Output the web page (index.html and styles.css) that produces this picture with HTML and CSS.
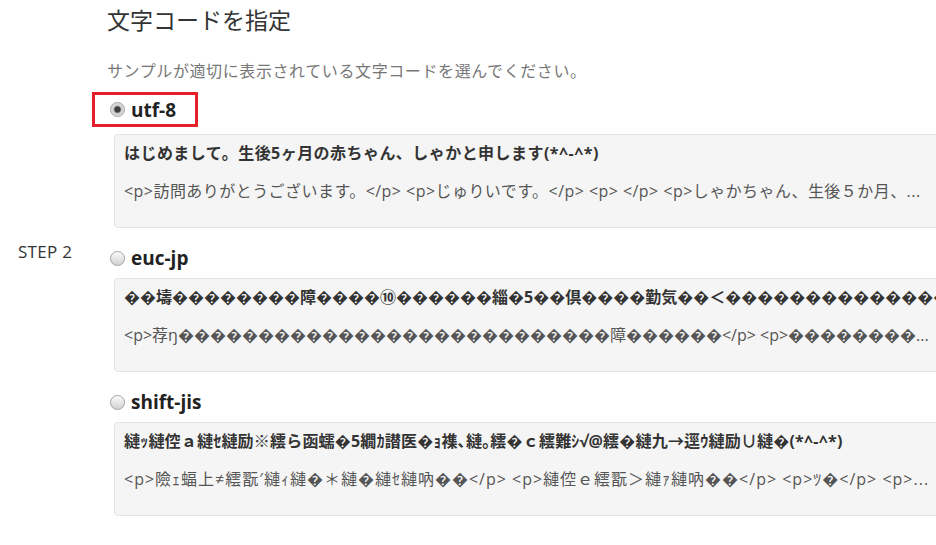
FILE: index.html
```html
<!DOCTYPE html>
<html>
<head>
    <title>文字コードを指定</title>
    <link rel="stylesheet" href="styles.css">
</head>
<body>
    <div class="page">
        <div class="step">STEP 2</div>

        <div class="main">
            <h2 class="title">文字コードを指定</h2>
            <p class="lead">サンプルが適切に表示されている文字コードを選んでください。</p>

            <!-- utf-8 -->
            <label class="choice picked"><input type="radio" name="charset" value="utf-8" checked> utf-8</label>
            <div class="sample sample-utf8">
                <p class="sample-title">はじめまして。生後5ヶ月の赤ちゃん、しゃかと申します(*^-^*)</p>
                <p class="sample-body">&lt;p&gt;訪問ありがとうございます。&lt;/p&gt; &lt;p&gt;じゅりいです。&lt;/p&gt; &lt;p&gt; &lt;/p&gt; &lt;p&gt;しゃかちゃん、生後５か月、...</p>
            </div>

            <!-- euc-jp -->
            <label class="choice"><input type="radio" name="charset" value="euc-jp"> euc-jp</label>
            <div class="sample sample-euc">
                <p class="sample-title">��壔��������障����⑩������緇�5��倶����勤気��＜����������������������</p>
                <p class="sample-body">&lt;p&gt;荐ŋ���������������������������障������&lt;/p&gt; &lt;p&gt;��������...</p>
            </div>

            <!-- shift-jis -->
            <label class="choice"><input type="radio" name="charset" value="shift-jis"> shift-jis</label>
            <div class="sample sample-sjis">
                <p class="sample-title">縺ｯ縺倥ａ縺ｾ縺励※繧ら函蠕�5繝ｶ譛医�ｮ襍､縺｡繧�ｃ繧難ｼ√@繧�縺九→逕ｳ縺励∪縺�(*^-^*)</p>
                <p class="sample-body">&lt;p&gt;險ｪ蝠上≠繧翫′縺ｨ縺�＊縺�縺ｾ縺吶��&lt;/p&gt; &lt;p&gt;縺倥ｅ繧翫＞縺ｧ縺吶��&lt;/p&gt; &lt;p&gt;ﾂ�&lt;/p&gt; &lt;p&gt;...</p>
            </div>
        </div>
    </div>
</body>
</html>
```

FILE: styles.css
```css
body {
    margin: 0;
    font-family: "Open Sans", "Noto Sans CJK JP", sans-serif;
    color: #333;
    background-color: #fff;
    overflow: hidden;
}

.page {
    display: flex;
}

.step {
    flex: 0 0 107px;
    box-sizing: border-box;
    padding: 240px 0 0 18px;
    font-size: 17px;
    line-height: 24px;
    letter-spacing: 0.3px;
}

.main {
    flex: 0 0 1000px;
}

.title {
    margin: 5px 0 0;
    font-size: 23px;
    line-height: 30px;
    font-weight: normal;
}

.lead {
    margin: 24px 0 0;
    font-size: 16px;
    line-height: 24px;
    letter-spacing: 0.6px;
    color: #777;
}

.choice {
    display: flex;
    align-items: center;
    gap: 6px;
    height: 26px;
    margin: 17px 0 7px 3px;
    font-size: 19px;
    font-weight: bold;
    color: #222;
}

.choice.picked {
    width: fit-content;
    height: 29px;
    margin: 9px 0 7px -15px;
    padding: 0 19px 0 15px;
    border: 3px solid #e5202a;
}

.choice input {
    appearance: none;
    margin: 0;
    width: 15px;
    height: 15px;
    box-sizing: border-box;
    border: 1px solid #a3a3a3;
    border-radius: 50%;
    background: linear-gradient(#fbfbfb, #d2d2d2);
}

.choice input:checked {
    background: radial-gradient(circle, #3d3d3d 0 2.7px, #9a9a9a 3.4px, #cfcfcf 4.3px, #efefef 100%);
}

.sample {
    margin-left: 7px;
    padding: 6px 9px 24px;
    background-color: #f5f5f5;
    border: 1px solid #e3e3e3;
    border-radius: 4px;
}

.sample p {
    margin: 0;
    font-size: 16px;
    line-height: 24px;
    white-space: nowrap;
    overflow: hidden;
}

.sample-title {
    font-weight: bold;
    color: #333;
}

.sample .sample-body {
    margin-top: 14px;
    color: #555;
}

.sample-utf8 p {
    letter-spacing: 0.45px;
}

.sample-sjis .sample-title {
    letter-spacing: 0.2px;
}

.sample-sjis .sample-body {
    letter-spacing: 1px;
}
```
